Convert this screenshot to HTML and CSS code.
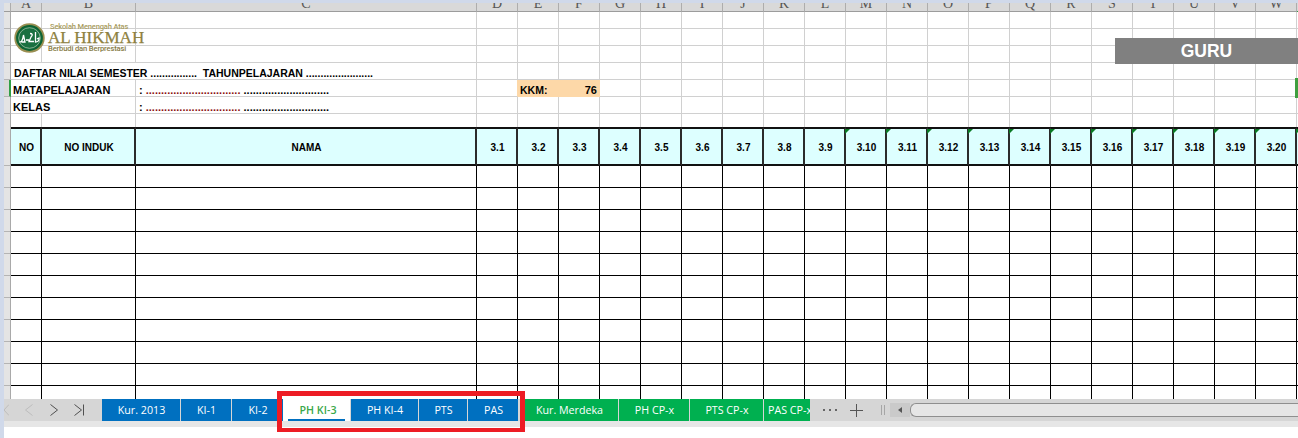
FILE: index.html
```html
<!DOCTYPE html>
<html lang="id">
<head>
<meta charset="utf-8">
<title>Daftar Nilai</title>
<link rel="stylesheet" href="styles.css">
</head>
<body>
<div class="app">
  <div class="sheet">
    <table class="grid">
      <colgroup>
        <col class="c-rh"><col class="c-a"><col class="c-b"><col class="c-c">
        <col class="c-n"><col class="c-n"><col class="c-n"><col class="c-n"><col class="c-n"><col class="c-n"><col class="c-n">
        <col class="c-n"><col class="c-n"><col class="c-n"><col class="c-n"><col class="c-n"><col class="c-n"><col class="c-n">
        <col class="c-n"><col class="c-n"><col class="c-n"><col class="c-n"><col class="c-n"><col class="c-n"><col class="c-n">
      </colgroup>
      <tr class="colhead">
        <th class="corner"></th>
        <th><div>A</div></th><th><div>B</div></th><th><div>C</div></th><th><div>D</div></th><th><div>E</div></th><th><div>F</div></th><th><div>G</div></th><th><div>H</div></th><th><div>I</div></th><th><div>J</div></th><th><div>K</div></th><th><div>L</div></th><th><div>M</div></th><th><div>N</div></th><th><div>O</div></th><th><div>P</div></th><th><div>Q</div></th><th><div>R</div></th><th><div>S</div></th><th><div>T</div></th><th><div>U</div></th><th><div>V</div></th><th><div>W</div></th><th><div>X</div></th>
      </tr>
      <tr class="top"><th class="rh"></th>
        <td></td><td></td><td></td><td></td><td></td><td></td>
        <td></td><td></td><td></td><td></td><td></td><td></td>
        <td></td><td></td><td></td><td></td><td></td><td></td>
        <td></td><td></td><td></td><td></td><td></td><td></td></tr>
      <tr class="top"><th class="rh"></th>
        <td></td><td></td><td></td><td></td><td></td><td></td>
        <td></td><td></td><td></td><td></td><td></td><td></td>
        <td></td><td></td><td></td><td></td><td></td><td></td>
        <td></td><td></td><td></td><td></td><td></td><td></td></tr>
      <tr class="top"><th class="rh"></th>
        <td></td><td></td><td></td><td></td><td></td><td></td>
        <td></td><td></td><td></td><td></td><td></td><td></td>
        <td></td><td></td><td></td><td></td><td></td><td></td>
        <td></td><td></td><td></td><td></td><td></td><td></td></tr>
      <tr class="top"><th class="rh"></th>
        <td colspan="3" class="label title">DAFTAR NILAI SEMESTER ................&nbsp; TAHUNPELAJARAN .......................</td>
        <td></td><td></td><td></td>
        <td></td><td></td><td></td><td></td><td></td><td></td>
        <td></td><td></td><td></td><td></td><td></td><td></td>
        <td></td><td></td><td></td><td></td><td></td><td></td></tr>
      <tr class="top"><th class="rh selected"></th>
        <td colspan="2" class="label">MATAPELAJARAN</td>
        <td class="fill">: <span class="dots-red">...............................</span> ............................</td>
        <td class="before-kkm"></td>
        <td colspan="2" class="kkm"><div class="kkm-in"><span class="kkm-label">KKM:</span><span>76</span></div></td>
        <td></td><td></td><td></td><td></td><td></td><td></td>
        <td></td><td></td><td></td><td></td><td></td><td></td>
        <td></td><td></td><td></td><td></td><td></td><td></td></tr>
      <tr class="top"><th class="rh"></th>
        <td colspan="2" class="label">KELAS</td>
        <td class="fill">: <span class="dots-red">...............................</span> ............................</td>
        <td></td><td></td><td></td>
        <td></td><td></td><td></td><td></td><td></td><td></td>
        <td></td><td></td><td></td><td></td><td></td><td></td>
        <td></td><td></td><td></td><td></td><td></td><td></td></tr>
      <tr class="top spacer"><th class="rh"></th>
        <td></td><td></td><td></td><td></td><td></td><td></td>
        <td></td><td></td><td></td><td></td><td></td><td></td>
        <td></td><td></td><td></td><td></td><td></td><td></td>
        <td></td><td></td><td></td><td></td><td></td><td></td></tr>
      <tr class="head">
        <th class="rh"></th>
        <td>NO</td><td>NO INDUK</td><td>NAMA</td>
        <td>3.1</td><td>3.2</td><td>3.3</td><td>3.4</td><td>3.5</td><td>3.6</td><td>3.7</td><td>3.8</td><td>3.9</td>
        <td class="mark">3.10</td><td class="mark">3.11</td><td class="mark">3.12</td><td class="mark">3.13</td><td class="mark">3.14</td><td class="mark">3.15</td><td class="mark">3.16</td><td class="mark">3.17</td><td class="mark">3.18</td><td class="mark">3.19</td><td class="mark">3.20</td><td class="mark"></td>
      </tr>
      <tr class="data"><th class="rh"></th><td></td><td></td><td></td><td></td><td></td><td></td><td></td><td></td><td></td><td></td><td></td><td></td><td></td><td></td><td></td><td></td><td></td><td></td><td></td><td></td><td></td><td></td><td></td><td></td></tr>
      <tr class="data"><th class="rh"></th><td></td><td></td><td></td><td></td><td></td><td></td><td></td><td></td><td></td><td></td><td></td><td></td><td></td><td></td><td></td><td></td><td></td><td></td><td></td><td></td><td></td><td></td><td></td><td></td></tr>
      <tr class="data"><th class="rh"></th><td></td><td></td><td></td><td></td><td></td><td></td><td></td><td></td><td></td><td></td><td></td><td></td><td></td><td></td><td></td><td></td><td></td><td></td><td></td><td></td><td></td><td></td><td></td><td></td></tr>
      <tr class="data"><th class="rh"></th><td></td><td></td><td></td><td></td><td></td><td></td><td></td><td></td><td></td><td></td><td></td><td></td><td></td><td></td><td></td><td></td><td></td><td></td><td></td><td></td><td></td><td></td><td></td><td></td></tr>
      <tr class="data"><th class="rh"></th><td></td><td></td><td></td><td></td><td></td><td></td><td></td><td></td><td></td><td></td><td></td><td></td><td></td><td></td><td></td><td></td><td></td><td></td><td></td><td></td><td></td><td></td><td></td><td></td></tr>
      <tr class="data"><th class="rh"></th><td></td><td></td><td></td><td></td><td></td><td></td><td></td><td></td><td></td><td></td><td></td><td></td><td></td><td></td><td></td><td></td><td></td><td></td><td></td><td></td><td></td><td></td><td></td><td></td></tr>
      <tr class="data"><th class="rh"></th><td></td><td></td><td></td><td></td><td></td><td></td><td></td><td></td><td></td><td></td><td></td><td></td><td></td><td></td><td></td><td></td><td></td><td></td><td></td><td></td><td></td><td></td><td></td><td></td></tr>
      <tr class="data"><th class="rh"></th><td></td><td></td><td></td><td></td><td></td><td></td><td></td><td></td><td></td><td></td><td></td><td></td><td></td><td></td><td></td><td></td><td></td><td></td><td></td><td></td><td></td><td></td><td></td><td></td></tr>
      <tr class="data"><th class="rh"></th><td></td><td></td><td></td><td></td><td></td><td></td><td></td><td></td><td></td><td></td><td></td><td></td><td></td><td></td><td></td><td></td><td></td><td></td><td></td><td></td><td></td><td></td><td></td><td></td></tr>
      <tr class="data"><th class="rh"></th><td></td><td></td><td></td><td></td><td></td><td></td><td></td><td></td><td></td><td></td><td></td><td></td><td></td><td></td><td></td><td></td><td></td><td></td><td></td><td></td><td></td><td></td><td></td><td></td></tr>
      <tr class="data last"><th class="rh"></th><td></td><td></td><td></td><td></td><td></td><td></td><td></td><td></td><td></td><td></td><td></td><td></td><td></td><td></td><td></td><td></td><td></td><td></td><td></td><td></td><td></td><td></td><td></td><td></td></tr>
    </table>
  </div>

  <div class="tabbar">
    <div class="nav">
      <span class="nav-item first"><svg width="5" height="12" viewBox="0 0 5 12"><path d="M5 .5 0 6l5 5.500" class="off"/></svg></span>
      <span class="nav-item"><svg width="8" height="12" viewBox="0 0 8 12"><path d="M7.500 .5 .5 6l7 5.500" class="off"/></svg></span>
      <span class="nav-item"><svg width="8" height="12" viewBox="0 0 8 12"><path d="M.5 .5 7.500 6l-7 5.500" class="on"/></svg></span>
      <span class="nav-item"><svg width="10" height="12" viewBox="0 0 10 12"><path d="M.5 .5 7.500 6l-7 5.500M9.500 .5v11" class="on"/></svg></span>
    </div>
    <div class="tab blue t-kur">Kur. 2013</div>
    <div class="tab blue t-ki1">KI-1</div>
    <div class="tab blue t-ki2">KI-2</div>
    <div class="tab active t-ph3">PH KI-3</div>
    <div class="tab blue t-ph4">PH KI-4</div>
    <div class="tab blue t-pts">PTS</div>
    <div class="tab blue t-pas">PAS</div>
    <div class="tab green t-mer">Kur. Merdeka</div>
    <div class="tab green t-phc">PH CP-x</div>
    <div class="tab green t-ptc">PTS CP-x</div>
    <div class="tab green t-pac">PAS CP-x</div>
    <svg class="more" width="14" height="2" viewBox="0 0 14 2"><path d="M0 0h2v2H0zM6 0h2v2H6zM12 0h2v2h-2z"/></svg>
    <svg class="plus" width="13" height="13" viewBox="0 0 13 13"><path d="M6.500 0v13M0 6.500h13"/></svg>
    <span class="splitter"></span>
    <div class="scroll">
      <span class="scroll-btn"><svg width="4" height="6" viewBox="0 0 4 6"><path d="M4 0v6L0 3z"/></svg></span>
      <span class="scroll-thumb"></span>
    </div>
  </div>
  <div class="strip"></div>

  <div class="logo">
    <svg class="logo-mark" width="31" height="30" viewBox="0 0 31 30">
      <ellipse cx="15.500" cy="15" rx="15.200" ry="14.700" fill="#9a8f52"/>
      <ellipse cx="15.500" cy="15" rx="13.400" ry="12.900" fill="#0d6434"/>
      <ellipse cx="15.500" cy="15" rx="10.800" ry="10.300" fill="#1a7040" stroke="#b9d0b8" stroke-width=".7"/>
      <path d="M5.500 19c2 0 3-1 4-7l1.500 7H7.500M12 17h3M16 10.500c2.500 0 3 1.500 1 3.500l-2 4.500h5M21.500 9v10c1.500 0 4-.5 3.500-4l-2 1" fill="none" stroke="#fff" stroke-width="1.300"/>
    </svg>
    <div class="logo-text">
      <div class="logo-top">Sekolah Menengah Atas</div>
      <div class="logo-name">AL HIKMAH</div>
      <div class="logo-sub">Berbudi dan Berprestasi</div>
    </div>
  </div>
  <div class="guru">GURU</div>
  <div class="edge-mark"></div>
  <div class="highlight"></div>
</div>
</body>
</html>
```

FILE: styles.css
```css
* { box-sizing: border-box; }
html, body { margin: 0; padding: 0; background: #fff; }
body { overflow: hidden; }

.app {
  position: relative;
  width: 1298px;
  height: 438px;
  padding: 3px 0 0 4px;
  background: #d0d9ea;
  overflow: hidden;
  display: flex;
  flex-direction: column;
  font-family: "Liberation Sans", Arial, sans-serif;
  color: #000;
}
.app::after {
  content: "";
  flex: 1;
  background: #fff;
}

.sheet { height: 396px; overflow: hidden; background: #fff; }

.grid {
  table-layout: fixed;
  width: 1334px;
  border-collapse: separate;
  border-spacing: 0;
}
.c-rh { width: 7px; }
.c-a { width: 31px; }
.c-b { width: 94px; }
.c-c { width: 341px; }
.c-n { width: 41px; }

.grid th, .grid td { padding: 0; }

.colhead th {
  height: 9px;
  background: #d9d9d9;
  border-right: 1px solid #adadad;
  border-bottom: 1px solid #9c9c9c;
  font: 400 14px "Liberation Serif", serif;
  color: #555;
  text-align: center;
}
.colhead div { height: 8px; line-height: 1px; overflow: hidden; }
.colhead .corner { background: #e2e2e2; }
.colhead th:last-child { border-bottom-color: #2f9e44; }

.rh {
  background: #e4e4e4;
  border-right: 1px solid #a9a9a9;
  border-bottom: 1px solid #b4b4b4;
}
.rh.selected { border-right: 2px solid #2f9e44; background: #d9d9d9; }

.top td {
  height: 17px;
  border-right: 1px solid #d0d0d0;
  border-bottom: 1px solid #d0d0d0;
  font-size: 11px;
  font-weight: 700;
  white-space: nowrap;
  overflow: hidden;
}
.top th { height: 17px; }
.top td.label, .top td.fill, .top td.kkm { padding-top: 4px; line-height: 12px; }
.top td.label { padding-left: 2px; }
.top td.fill { padding-left: 3px; }
.top td.title { font-size: 10.500px; padding-left: 3px; }
.dots-red { color: #8a1010; }
.top td.before-kkm { border-right-color: #fdd8a8; }
.top td.kkm { background: #fdd8a8; border-color: #fdd8a8; }
.kkm-in { display: flex; justify-content: space-between; padding: 0 2px; }
.kkm-label { font-size: 10.500px; }

.top.spacer th, .top.spacer td { height: 13px; border-bottom: 0; }

.head th, .head td { height: 39px; }
.grid .head td {
  position: relative;
  padding: 2px 0 0 2px;
  background: #ddffff;
  border-top: 2px solid #111;
  border-bottom: 2px solid #111;
  border-right: 2px solid #2b2b2b;
  font-size: 10px;
  font-weight: 700;
  text-align: center;
}
.mark::before {
  content: "";
  position: absolute;
  left: -1px;
  top: 0;
  border-top: 5px solid #0a7a24;
  border-right: 5px solid transparent;
}

.data th, .data td { height: 22px; }
.data td {
  border-right: 1px solid #000;
  border-bottom: 1px solid #000;
}
.data.last th, .data.last td { height: 13px; border-bottom: 0; }

.tabbar {
  display: flex;
  align-items: stretch;
  height: 22px;
  background: #d6d6d6;
  font: 400 10.700px "Open Sans", sans-serif;
}
.nav { display: flex; width: 98px; flex: none; }
.nav-item { display: flex; align-items: center; justify-content: center; width: 25px; }
.nav-item.first { width: 12.500px; justify-content: flex-start; }
.nav path { fill: none; stroke-width: 1; }
.nav .off { stroke: #bdbdbd; }
.nav .on { stroke: #505050; }

.tab {
  display: flex;
  align-items: center;
  justify-content: center;
  flex: none;
  margin-right: 1px;
  padding: 0 0 1px 1px;
  white-space: nowrap;
  overflow: hidden;
  color: #fff;
}
.blue { background: #0070c0; }
.green { background: #00b050; }
.active {
  position: relative;
  background: #fff;
  color: #3aa84a;
  font-weight: 600;
}
.active::after {
  content: "";
  position: absolute;
  left: 5px;
  right: 5px;
  bottom: 0;
  height: 2px;
  background: #0070c0;
}
.t-kur { width: 78px; }
.t-ki1 { width: 50px; }
.t-ki2 { width: 51px; margin-right: 0; }
.t-ph3 { width: 67px; padding-left: 3px; }
.t-ph4 { width: 67px; }
.t-pts { width: 48px; }
.t-pas { width: 50px; margin-right: 2px; }
.t-mer { width: 98px; }
.t-phc { width: 70px; }
.t-ptc { width: 73px; }
.t-pac { width: 46px; margin-right: 0; justify-content: flex-start; padding-left: 4px; }

.more { flex: none; margin: 10px 0 0 13px; fill: #666; }
.plus { flex: none; margin: 5px 0 0 13px; stroke: #555; stroke-width: 1; }
.splitter {
  flex: none;
  width: 4px;
  height: 10px;
  margin: 6px 0 0 18px;
  border-left: 1px solid #a6a6a6;
  border-right: 1px solid #a6a6a6;
}
.scroll { display: flex; flex: 1; margin: 4px 0 4px 5px; }
.scroll-btn {
  display: flex;
  align-items: center;
  justify-content: center;
  width: 20px;
  background: #cacaca;
  fill: #555;
}
.scroll-thumb {
  flex: 1;
  background: #e6e6e6;
  border: 1px solid #8f8f8f;
  border-right: 0;
  border-radius: 6px 0 0 6px;
}

.strip { height: 6px; background: #e6e6e6; }

.logo {
  position: absolute;
  left: 14px;
  top: 23px;
  display: flex;
  gap: 3px;
}
.logo-text { color: #8e8140; }
.logo-top {
  font: 500 7.500px/8px Roboto, sans-serif;
  letter-spacing: -.15px;
  margin-left: 2px;
  color: #a89c60;
}
.logo-name {
  font: 400 17px/13px "Liberation Serif", serif;
  -webkit-text-stroke: .25px #8e8140;
}
.logo-sub {
  font: 500 7.600px/9px Roboto, sans-serif;
  letter-spacing: -.15px;
  color: #857a44;
}

.guru {
  position: absolute;
  left: 1115px;
  top: 38px;
  width: 183px;
  height: 26px;
  background: #808080;
  color: #fff;
  font-size: 17.500px;
  font-weight: 700;
  line-height: 26px;
  text-align: center;
}
.edge-mark {
  position: absolute;
  left: 1295px;
  top: 78px;
  width: 3px;
  height: 20px;
  background: #3f9f3f;
}
.highlight {
  position: absolute;
  left: 277px;
  top: 391px;
  width: 248px;
  height: 41px;
  border: 5px solid #ed1c24;
  border-bottom-width: 4px;
}
```
